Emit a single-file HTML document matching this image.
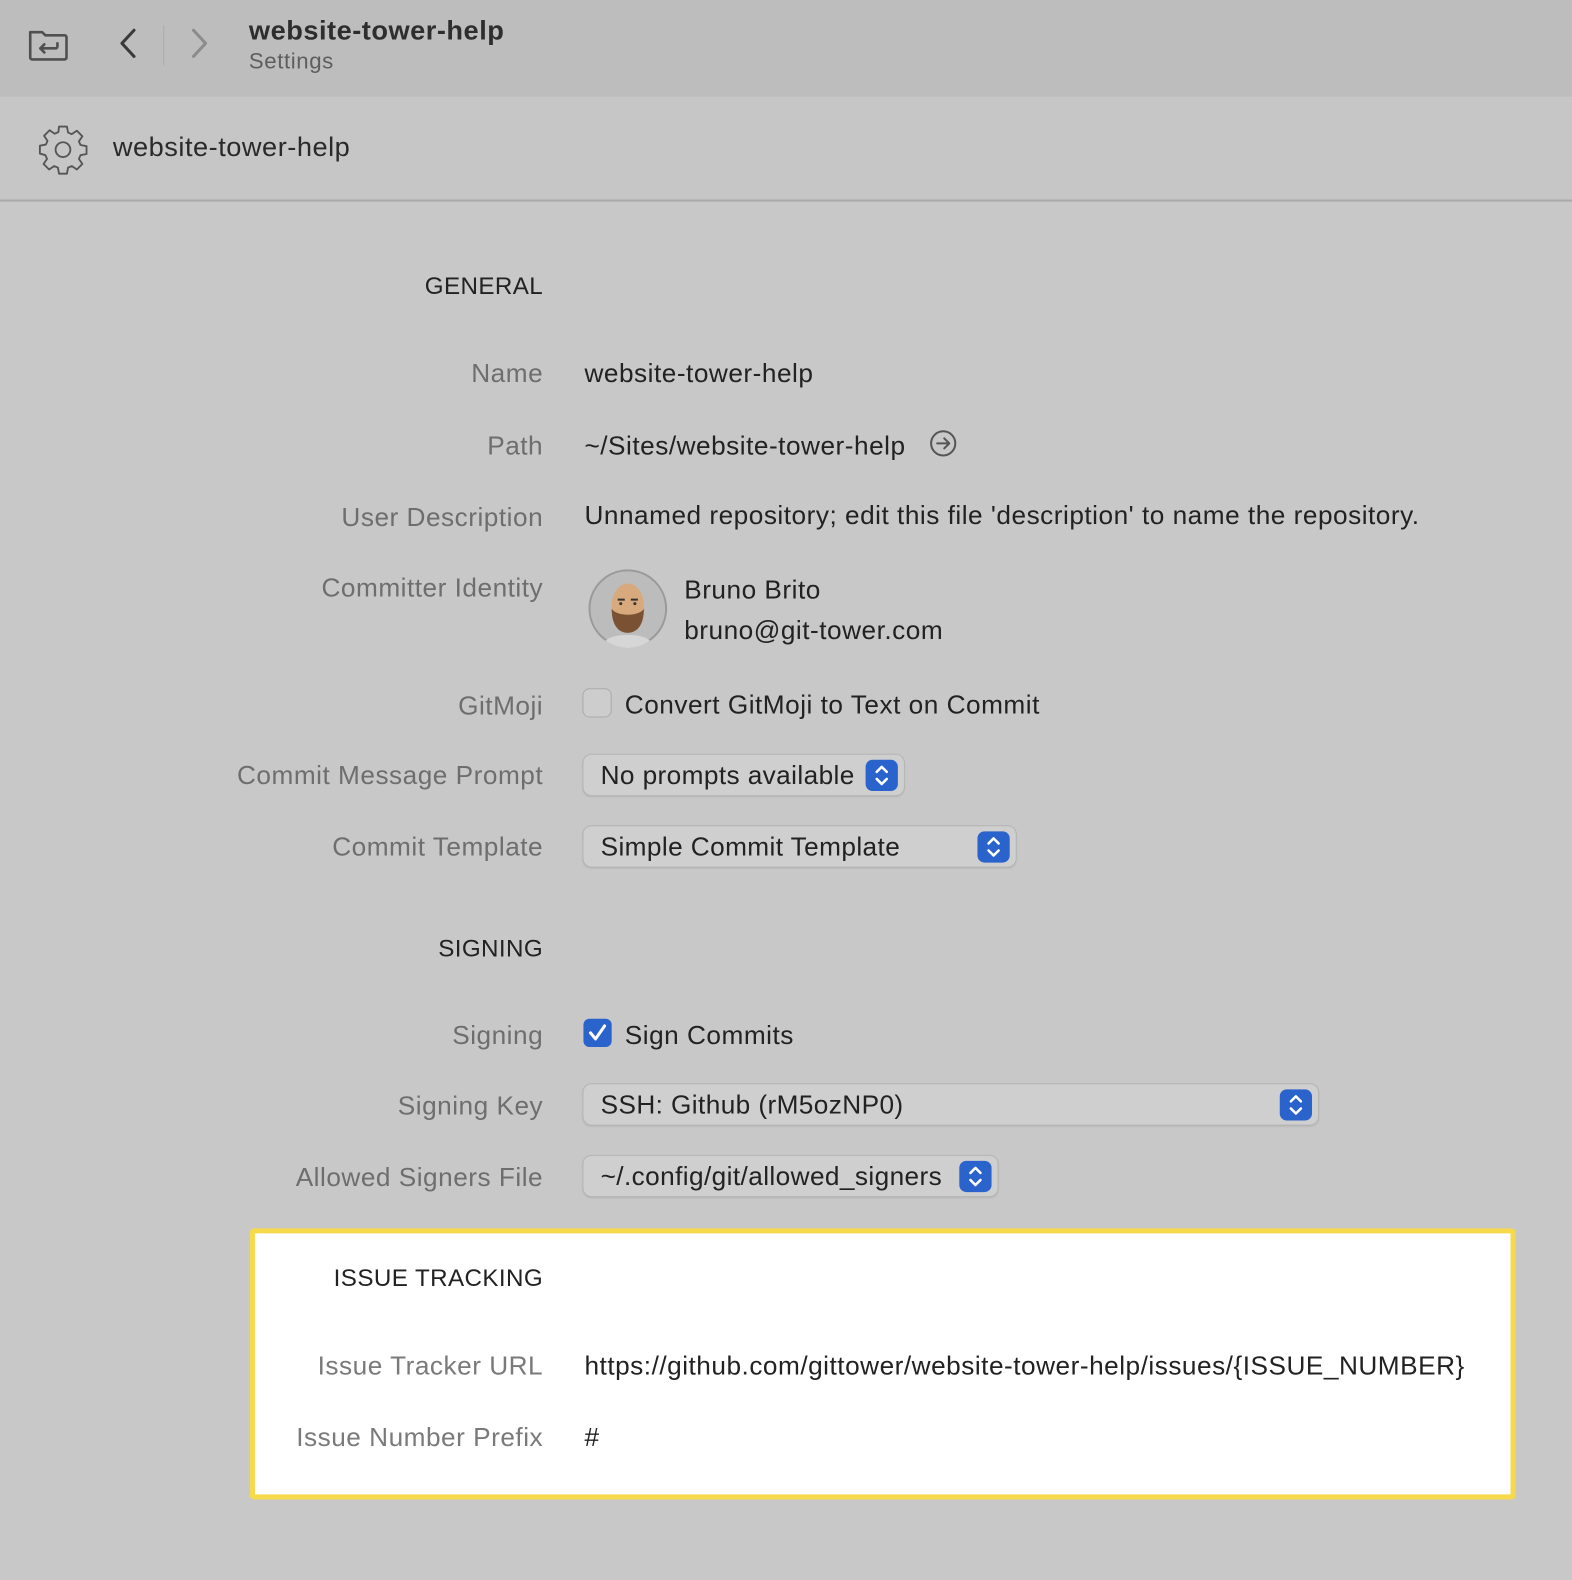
<!DOCTYPE html>
<html><head><meta charset="utf-8"><style>
html,body{margin:0;padding:0;width:1572px;height:1580px;overflow:hidden;background:#c8c8c8}
#w{position:absolute;left:0;top:0;width:1560px;height:1568px;transform:scale(1.00769);transform-origin:0 0;font-family:"Liberation Sans",sans-serif;color:#262626}
.a{position:absolute;white-space:nowrap}
.lbl{position:absolute;right:1021px;font-size:26px;letter-spacing:0.5px;color:#6e6e6e;white-space:nowrap;margin-top:1px}
.val{position:absolute;left:580px;font-size:26px;letter-spacing:0.5px;color:#222;white-space:nowrap;margin-top:1px}
.hd{position:absolute;right:1021px;font-size:24px;letter-spacing:0.4px;color:#222;white-space:nowrap;margin-top:1px}
.dd{position:absolute;left:579px;height:40px;border-radius:8px;background:#cfcfcf;box-shadow:0 0 0 1px #b4b4b4,0 1px 2px rgba(0,0,0,.15);font-size:26px;letter-spacing:0.4px;color:#222;box-sizing:border-box;padding-left:17px;line-height:40px}
.st{position:absolute;right:6px;top:5px;width:32px;height:31px;border-radius:7px;background:#2a63cb}
</style></head><body><div id="w">
<div class="a" style="left:0;top:0;width:1560px;height:96px;background:#bdbdbd"></div>
<div class="a" style="left:0;top:96px;width:1560px;height:102px;background:#c6c6c6;border-bottom:2px solid #a9a9a9"></div>
<svg class="a" style="left:26px;top:26px" width="44" height="36" viewBox="0 0 44 36" fill="none" stroke="#505050" stroke-width="2.6" stroke-linejoin="round" stroke-linecap="round"><path d="M4 6h12l3 3h19a2 2 0 0 1 2 2v20a2 2 0 0 1-2 2H6a2 2 0 0 1-2-2z"/><path d="M31 17v3a2 2 0 0 1-2 2H14M18 18l-4 4 4 4"/></svg>
<svg class="a" style="left:115px;top:26px" width="24" height="34" viewBox="0 0 24 34" fill="none" stroke="#3a3a3a" stroke-width="3" stroke-linecap="round" stroke-linejoin="round"><path d="M18 4L6 17l12 13"/></svg>
<div class="a" style="left:162px;top:25px;width:1px;height:40px;background:#ababab"></div>
<svg class="a" style="left:186px;top:26px" width="24" height="34" viewBox="0 0 24 34" fill="none" stroke="#8c8c8c" stroke-width="3" stroke-linecap="round" stroke-linejoin="round"><path d="M6 4l12 13L6 30"/></svg>
<div class="a" style="left:247px;top:15px;font-size:27px;letter-spacing:0.5px;font-weight:bold;color:#2e2e2e">website-tower-help</div>
<div class="a" style="left:247px;top:48px;font-size:22px;letter-spacing:0.6px;color:#5e5e5e">Settings</div>
<svg class="a" style="left:35px;top:121px" width="55" height="55" viewBox="0 0 24 24" fill="none" stroke="#555" stroke-width="0.8" stroke-linejoin="round"><path d="M10.3 2h3.4l.5 2.6 1.6.7 2.2-1.5 2.4 2.4-1.5 2.2.7 1.6 2.6.5v3.4l-2.6.5-.7 1.6 1.5 2.2-2.4 2.4-2.2-1.5-1.6.7-.5 2.6h-3.4l-.5-2.6-1.6-.7-2.2 1.5-2.4-2.4 1.5-2.2-.7-1.6L2 13.7v-3.4l2.6-.5.7-1.6-1.5-2.2 2.4-2.4 2.2 1.5 1.6-.7z"/><circle cx="12" cy="12" r="3.2"/></svg>
<div class="a" style="left:112px;top:131px;font-size:27px;letter-spacing:0.5px;color:#2a2a2a">website-tower-help</div>

<div class="hd" style="top:270px">GENERAL</div>
<div class="lbl" style="top:354px">Name</div><div class="val" style="top:354px">website-tower-help</div>
<div class="lbl" style="top:426px">Path</div><div class="val" style="top:426px">~/Sites/website-tower-help</div>
<svg class="a" style="left:922px;top:426px" width="28" height="28" viewBox="0 0 28 28" fill="none" stroke="#555" stroke-width="2" stroke-linecap="round" stroke-linejoin="round"><circle cx="14" cy="14" r="12"/><path d="M8 14h12M15 9l5 5-5 5"/></svg>
<div class="lbl" style="top:497px">User Description</div><div class="val" style="top:495px">Unnamed repository; edit this file 'description' to name the repository.</div>
<div class="lbl" style="top:567px">Committer Identity</div>
<svg class="a" style="left:583px;top:564px" width="80" height="80" viewBox="0 0 80 80"><circle cx="40" cy="40" r="38" fill="#bcbcbc" stroke="#9a9a9a" stroke-width="2"/><path d="M18 72c6-8 38-8 44 0a38 38 0 0 1-44 0z" fill="#d6d6d6"/><ellipse cx="40" cy="37" rx="16" ry="22" fill="#d8a97c"/><path d="M24 40c0 18 8 24 16 24s16-6 16-24c-4 8-28 8-32 0z" fill="#7a5233"/><path d="M30 31h7M43 31h7" stroke="#333" stroke-width="2"/><circle cx="33" cy="35" r="1.5" fill="#333"/><circle cx="47" cy="35" r="1.5" fill="#333"/></svg>
<div class="a" style="left:679px;top:570px;font-size:26px;letter-spacing:0.5px;color:#222">Bruno Brito</div>
<div class="a" style="left:679px;top:610px;font-size:26px;letter-spacing:0.5px;color:#222">bruno@git-tower.com</div>
<div class="lbl" style="top:684px">GitMoji</div>
<div class="a" style="left:579px;top:684px;width:27px;height:27px;border-radius:6px;background:#cdcdcd;box-shadow:0 0 0 1px #aaa"></div>
<div class="a" style="left:620px;top:684px;font-size:26px;letter-spacing:0.5px;color:#222">Convert GitMoji to Text on Commit</div>
<div class="lbl" style="top:753px">Commit Message Prompt</div>
<div class="dd" style="top:749px;width:318px">No prompts available<div class="st"><svg width="32" height="31" viewBox="0 0 32 31" fill="none" stroke="#fff" stroke-width="2.5" stroke-linecap="round" stroke-linejoin="round"><path d="M11 12l5-5 5 5M11 19l5 5 5-5"/></svg></div></div>
<div class="lbl" style="top:824px">Commit Template</div>
<div class="dd" style="top:820px;width:429px">Simple Commit Template<div class="st"><svg width="32" height="31" viewBox="0 0 32 31" fill="none" stroke="#fff" stroke-width="2.5" stroke-linecap="round" stroke-linejoin="round"><path d="M11 12l5-5 5 5M11 19l5 5 5-5"/></svg></div></div>

<div class="hd" style="top:927px">SIGNING</div>
<div class="lbl" style="top:1011px">Signing</div>
<div class="a" style="left:579px;top:1011px;width:28px;height:28px;border-radius:6px;background:#2a63cb"><svg width="28" height="28" viewBox="0 0 28 28" fill="none" stroke="#fff" stroke-width="3" stroke-linecap="round" stroke-linejoin="round"><path d="M7 14l5 6 9-13"/></svg></div>
<div class="a" style="left:620px;top:1012px;font-size:26px;letter-spacing:0.5px;color:#222">Sign Commits</div>
<div class="lbl" style="top:1081px">Signing Key</div>
<div class="dd" style="top:1076px;width:729px">SSH: Github (rM5ozNP0)<div class="st"><svg width="32" height="31" viewBox="0 0 32 31" fill="none" stroke="#fff" stroke-width="2.5" stroke-linecap="round" stroke-linejoin="round"><path d="M11 12l5-5 5 5M11 19l5 5 5-5"/></svg></div></div>
<div class="lbl" style="top:1152px">Allowed Signers File</div>
<div class="dd" style="top:1147px;width:411px">~/.config/git/allowed_signers<div class="st"><svg width="32" height="31" viewBox="0 0 32 31" fill="none" stroke="#fff" stroke-width="2.5" stroke-linecap="round" stroke-linejoin="round"><path d="M11 12l5-5 5 5M11 19l5 5 5-5"/></svg></div></div>

<div class="a" style="left:248px;top:1219px;width:1256px;height:269px;box-sizing:border-box;border:5px solid #f7d94c;border-radius:4px;background:#fff"></div>
<div class="hd" style="top:1254px">ISSUE TRACKING</div>
<div class="lbl" style="top:1339px;color:#7a7a7a">Issue Tracker URL</div><div class="val" style="top:1339px">https://github.com/gittower/website-tower-help/issues/{ISSUE_NUMBER}</div>
<div class="lbl" style="top:1410px;color:#7a7a7a">Issue Number Prefix</div><div class="val" style="top:1410px">#</div>
</div></body></html>
